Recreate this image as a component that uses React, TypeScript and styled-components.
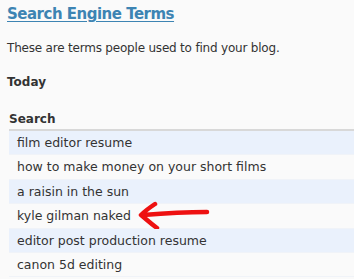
import styled, { createGlobalStyle } from "styled-components";

const terms = [
  "film editor resume",
  "how to make money on your short films",
  "a raisin in the sun",
  "kyle gilman naked",
  "editor post production resume",
  "canon 5d editing",
];

function App() {
  return (
    <Page>
      <GlobalStyle />
      <Title href="#">Search Engine Terms</Title>
      <Intro>These are terms people used to find your blog.</Intro>
      <Day>Today</Day>
      <Table>
        <HeadCell>Search</HeadCell>
        {terms.map((term, i) => (
          <Row key={i} $odd={i % 2 === 0}>
            {term}
            {term === "kyle gilman naked" && <Arrow />}
          </Row>
        ))}
      </Table>
    </Page>
  );
}

function Arrow() {
  return (
    <ArrowSvg width="76" height="30" viewBox="0 0 76 30">
      <path
        d="M70 11 C55 11 30 12 6 14 M18 3 C12 7 8 10 4 14 C9 18 13 22 20 27"
        fill="none"
        stroke="#ee1111"
        strokeWidth="4.5"
        strokeLinecap="round"
        strokeLinejoin="round"
      />
    </ArrowSvg>
  );
}

export default App;

const GlobalStyle = createGlobalStyle`
  body {
    margin: 0;
    background: #fafafa;
  }
`;

const Page = styled.div`
  width: 354px;
  height: 279px;
  overflow: hidden;
  padding: 4px 0 0 7px;
  box-sizing: border-box;
  font-family: "DejaVu Sans", "Liberation Sans", sans-serif;
  color: #333;
`;

const Title = styled.a`
  display: block;
  font-size: 15px;
  line-height: 20px;
  font-weight: bold;
  letter-spacing: -0.5px;
  color: #3d84b3;
  text-decoration: underline;
  text-underline-offset: 2px;
  margin: 0 0 16px 0;
`;

const Intro = styled.p`
  font-size: 12px;
  line-height: 16px;
  letter-spacing: -0.2px;
  margin: 0 0 18px 0;
`;

const Day = styled.h3`
  font-size: 12px;
  line-height: 16px;
  font-weight: bold;
  margin: 0 0 21px 0;
`;

const Table = styled.div`
  margin-left: 2px;
`;

const HeadCell = styled.div`
  font-size: 12px;
  line-height: 16px;
  font-weight: bold;
  padding: 0 0 2px 0;
  border-bottom: 2px solid #d8d8d8;
`;

const Row = styled.div<{ $odd: boolean }>`
  position: relative;
  height: 24.4px;
  line-height: 24px;
  font-size: 12.5px;
  padding-left: 8px;
  background: ${(p) => (p.$odd ? "#eaf1fc" : "#fafafa")};
  border-bottom: 0.4px solid #f0f3f8;
  box-sizing: border-box;
`;

const ArrowSvg = styled.svg`
  position: absolute;
  left: 128px;
  top: -3px;
`;
